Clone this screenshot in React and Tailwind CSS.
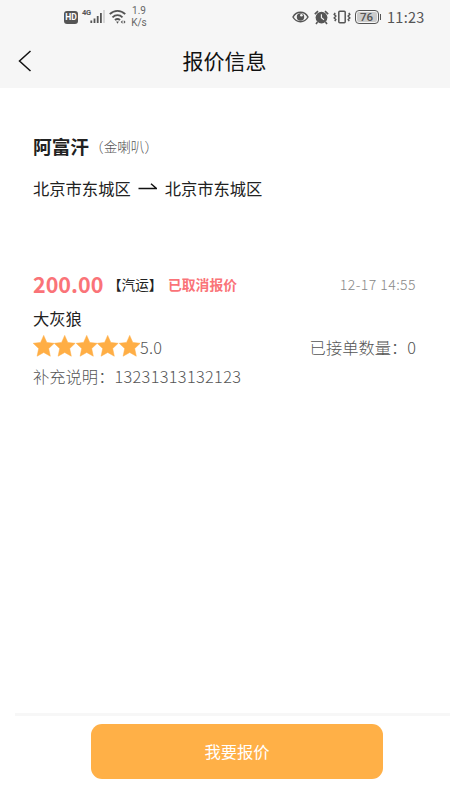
const STARS = [1, 2, 3, 4, 5]

function Star() {
  return (
    <svg className="block h-[22px] w-[21.4px]" viewBox="0 0 21.4 22">
      <path
        d="M10.7 .4 L13.8 7.4 L21.2 8.3 L15.7 13.5 L17.3 21.2 L10.7 17.5 L4.1 21.2 L5.7 13.5 L.2 8.3 L7.6 7.4 Z"
        fill="#ffae45"
        stroke="#ffae45"
        strokeWidth=".5"
        strokeLinejoin="round"
      />
    </svg>
  )
}

function StatusBar() {
  return (
    <div className="flex h-[34px] items-center pl-[64px] text-[#555]">
      <div className="flex h-[13px] w-[14px] items-center justify-center rounded-[3px] bg-[#555] font-[Roboto,sans-serif] text-[8.5px] font-bold leading-none text-white">
        HD
      </div>
      <div className="ml-[4px] mb-[9px] w-[8px] font-[Roboto,sans-serif] text-[7.5px] font-bold leading-none tracking-tighter">4G</div>
      {/* Signal, the last bar is empty */}
      <svg className="block h-[14px] w-[15px]" viewBox="0 0 15 14">
        <path d="M1.3 13v-2.5M4.5 13v-4.5M7.7 13V6M10.9 13V3" stroke="#555" strokeWidth="1.8" />
        <path d="M14 13V0" stroke="#ccc" strokeWidth="1.5" />
      </svg>
      <svg className="ml-[4px] block h-[16px] w-[18px]" viewBox="0 0 18 16" fill="none" stroke="#555" strokeWidth="1.9">
        <path d="M.8 5.2C5.2 .7 11.8 .7 16.2 5.2M3.5 8.3c2.9-2.9 7.1-2.9 10 0M6 11.1c1.5-1.5 3.5-1.5 5 0" />
        <path d="M7.1 12.6h2.8l-1.4 2.2z" fill="#555" stroke="none" />
        <path d="M13.5 11.2 11.7 13l1.8 1.8zM14.8 11.2l1.8 1.8-1.8 1.8z" fill="#555" stroke="none" />
      </svg>
      <div className="ml-[2px] w-[20px] text-center font-[Roboto,sans-serif] text-[10px] leading-[12px] text-[#666]">
        <div>1.9</div>
        <div>K/s</div>
      </div>
      <div className="ml-auto flex items-center pr-[25px]">
        <svg className="block h-[12px] w-[17px]" viewBox="0 0 17 12" fill="none" stroke="#555">
          <path d="M1 6C4.5-.3 12.5-.3 16 6 12.5 12.3 4.5 12.3 1 6Z" strokeWidth="1.5" />
          <circle cx="8.5" cy="6" r="3.7" fill="#555" stroke="none" />
          <circle cx="9.4" cy="4.2" r="1.3" fill="#f6f6f6" stroke="none" />
        </svg>
        <svg className="ml-[5px] block h-[15px] w-[15px]" viewBox="0 0 15 15" fill="none" stroke="#555">
          <circle cx="7.5" cy="7.6" r="5.9" fill="#555" stroke="none" />
          <path d="M.8 4.2 4 1.2M14.2 4.2l-3.2-3M3.5 12l-1.5 2M11.5 12l1.5 2" strokeWidth="1.6" />
          <path d="M7.4 4.2v3.6l2.6 1.9" stroke="#f6f6f6" strokeWidth="1.1" />
        </svg>
        <svg className="ml-[4px] block h-[14px] w-[18px]" viewBox="0 0 18 14" fill="none" stroke="#555">
          <rect x="5.8" y="1.2" width="6.4" height="11.6" rx="1" strokeWidth="1.5" />
          <path d="m2.2 2.8-1 1.6 1.6 1.6-1.6 1.9 1.6 1.7-1 1.6M15.8 2.8l1 1.6L15.2 6l1.6 1.9-1.6 1.7 1 1.6" strokeWidth="1.5" />
        </svg>
        <div className="ml-[4px] flex h-[14px] w-[24px] rounded-[4px] border-[1.5px] border-[#555] p-px">
          <div className="flex w-full items-center justify-center rounded-[2px] bg-[#ccc] pt-px font-[Roboto,sans-serif] text-[11.5px] font-medium leading-none">
            76
          </div>
        </div>
        <div className="ml-px h-[6px] w-[1.5px] bg-[#555]" />
        <div className="ml-[6px] w-[38px] whitespace-nowrap text-[14.5px] leading-none tracking-[.3px]">11:23</div>
      </div>
    </div>
  )
}

export default function App() {
  return (
    <div className="flex h-[800px] w-[450px] flex-col overflow-hidden whitespace-nowrap bg-white font-['Noto_Sans_CJK_SC',sans-serif] text-[#222]">
      <header className="h-[88px] shrink-0 bg-[#f6f6f6]">
        <StatusBar />
        <div className="grid h-[54px] grid-cols-[1fr_auto_1fr] items-center">
          <svg className="ml-[18px] block h-[22px] w-[14px]" viewBox="0 0 14 22" fill="none" stroke="#111" strokeWidth="1.5">
            <path d="M12.5 1 1.5 11l11 10" />
          </svg>
          <h1 className="-ml-px pb-[2px] text-[21px] leading-[52px] text-[#111]">报价信息</h1>
        </div>
      </header>

      <main className="flex-1 pl-[33px] pr-[34px]">
        <div className="mt-[44px] flex h-[28px] items-center">
          <span className="text-[18.7px] font-bold leading-7">阿富汗</span>
          <span className="ml-px text-[13.6px] font-light leading-7 text-[#555]">（金喇叭）</span>
        </div>
        <div className="mt-[15px] flex h-[26px] items-center text-[16.3px]">
          <span>北京市东城区</span>
          <svg className="mx-[7.5px] block h-[10px] w-[19px]" viewBox="0 0 19 10" fill="none" stroke="#111" strokeWidth="1.5">
            <path d="M.5 5.5h18L13 .8" />
          </svg>
          <span>北京市东城区</span>
        </div>

        <div className="mt-[68px] flex h-[30px] items-center">
          <span className="w-[75px] text-[21.5px] font-bold leading-[30px] text-[#fa7378]">200.00</span>
          <span className="w-[60px] text-[13.6px]">【汽运】</span>
          <span className="text-[13.8px] font-bold text-[#fa7378]">已取消报价</span>
          <span className="ml-auto text-[14px] font-light tracking-[.45px] text-[#888]">12-17 14:55</span>
        </div>
        <div className="mt-[6px] text-[16.3px] leading-[26px]">大灰狼</div>
        <div className="mt-[2px] flex h-[28px] items-center text-[16.3px] font-light text-[#555]">
          <div className="flex pb-[2px]">
            {STARS.map(n => <Star key={n} />)}
          </div>
          <span className="tracking-[.3px]">5.0</span>
          <span className="ml-auto">已接单数量：0</span>
        </div>
        <div className="mt-[2px] text-[16.3px] font-light leading-[26px] text-[#555]">
          补充说明：<span className="tracking-[.35px]">13231313132123</span>
        </div>
      </main>

      <footer className="flex h-[87px] shrink-0 flex-col">
        <div className="ml-[15px] h-[3px] bg-[#f7f7f7]" />
        <button className="ml-[91px] mt-[8px] h-[55px] w-[292px] rounded-[11px] bg-[#ffb047] pb-px text-[16.3px] text-white">
          我要报价
        </button>
      </footer>
    </div>
  )
}
